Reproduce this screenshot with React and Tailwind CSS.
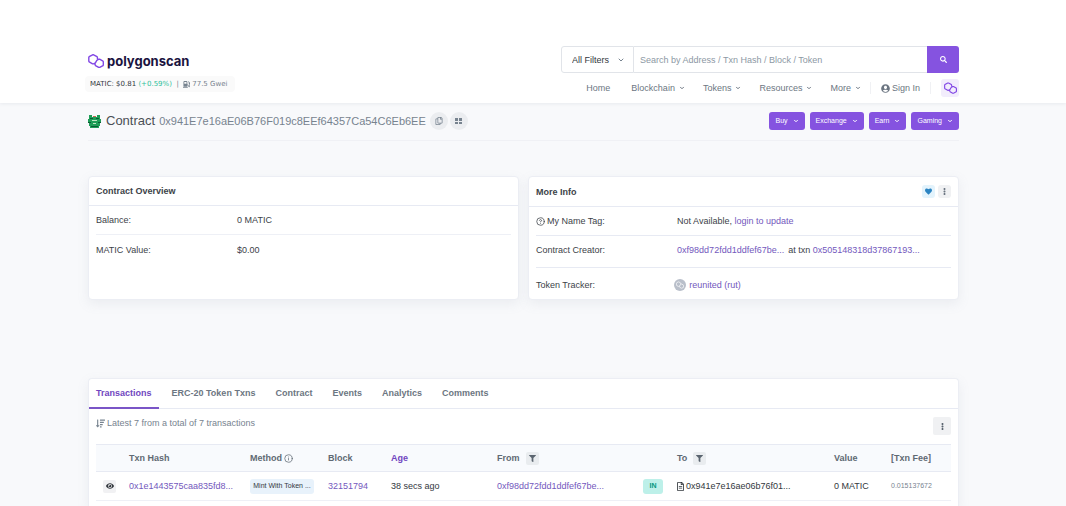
import React from 'react';
import {
    FaEllipsisV,
    FaEye,
    FaFilter,
    FaGasPump,
    FaHeart,
    FaRegCopy,
    FaRegFileAlt,
    FaSearch,
    FaSortAmountDown,
    FaUserCircle,
} from 'react-icons/fa';
import { ChevronDown, CircleHelp, Info } from 'lucide-react';

const navItems = ['Blockchain', 'Tokens', 'Resources', 'More'];

const actions = ['Buy', 'Exchange', 'Earn', 'Gaming'];

const tabs = ['Transactions', 'ERC-20 Token Txns', 'Contract', 'Events', 'Analytics', 'Comments'];

const transactions = [
    {
        hash: '0x1e1443575caa835fd8...',
        method: 'Mint With Token ...',
        block: '32151794',
        age: '38 secs ago',
        from: '0xf98dd72fdd1ddfef67be...',
        direction: 'IN',
        to: '0x941e7e16ae06b76f01...',
        value: '0 MATIC',
        fee: '0.015137672',
    },
];

function PolygonMark({ className }) {
    return (
        <svg viewBox="0 0 16 14" fill="none" stroke="currentColor" strokeLinejoin="round" strokeLinecap="round" className={className} aria-hidden="true">
            <path d="M9.4 4.6V3.4L9 2.7 5.6.8h-1L1.2 2.7l-.4.7v3.8l.4.7 3.4 2h1L7.4 8.8 8.8 6.4l2-1.2h.8L15 7.1l.3.7v3.2l-.3.7-3.3 1.7h-1l-3.2-1.8-.4-.8v-.6" strokeWidth="1.4" />
        </svg>
    );
}

function Avatar() {
    return (
        <svg viewBox="0 0 13 13" className="h-[13px] w-[13px]" aria-hidden="true">
            <path fill="#1f9d57" d="M1 0h3v2h5V0h3v4h1v4h-1v3h-1v2H2v-2H1V8H0V4h1z" />
            <path fill="#0b5a34" d="M2 3h3v1H2zm6 0h3v1H8zM0 7h3v1H0zm10 0h3v1h-3zM3 11h7v1H3z" />
            <path fill="#bfe6c0" d="M4 5h5v1H4zM5 8h3v1H5z" />
            <path fill="#c9694f" d="M5 1h3v1H5z" />
        </svg>
    );
}

function GridIcon() {
    return (
        <svg viewBox="0 0 8 8" fill="currentColor" className="h-2 w-2" aria-hidden="true">
            <path d="M0 1h3v3H0zm4 0h3v3H4zM0 5h3v2H0zm4 0h3v2H4z" />
        </svg>
    );
}

function Header() {
    return (
        <header className="bg-white pr-[107px] pb-[6px] pl-[88px] pt-[46px] shadow-[0_1px_3px_rgba(189,197,209,0.25)]">
            <div className="flex justify-between gap-8">
                <div className="pt-[7px]">
                    <a href="#" className="flex items-center gap-[3px] leading-4">
                        <PolygonMark className="h-[14px] w-4 text-[#8247e5]" />
                        <span className="font-[Inter,sans-serif] text-[13px] font-bold text-[#1a1340]">polygonscan</span>
                    </a>
                    <div className="mt-[7px] -ml-[3px] flex h-4 items-center rounded-sm bg-[#fafafa] px-[5px] pr-2 font-['DejaVu_Sans',sans-serif] text-[7px] whitespace-pre text-[#77838f]">
                        <span className="text-[#33383e]">MATIC: $0.81 </span>
                        <span className="text-[#2fbf9b]">(+0.59%)</span>
                        <span>{'  |  '}</span>
                        <FaGasPump className="mr-[2px] h-[7px] w-[7px]" />
                        <span>77.5 Gwei</span>
                    </div>
                </div>

                <div className="flex flex-col items-end">
                    <form className="flex h-[27px] w-[398px]">
                        <div className="relative">
                            <select aria-label="Search filter" className="h-full w-[73px] appearance-none rounded-l-[3px] border border-[#e1e4e9] bg-white pl-[10px] text-[9px] text-[#33383e]">
                                <option>All Filters</option>
                            </select>
                            <ChevronDown className="pointer-events-none absolute top-[10px] right-[9px] h-2 w-2 text-[#77838f]" strokeWidth={3} />
                        </div>
                        <input
                            type="text"
                            aria-label="Search"
                            placeholder="Search by Address / Txn Hash / Block / Token"
                            className="min-w-0 flex-1 border-y border-[#e1e4e9] bg-white px-[6px] text-[9px] placeholder:text-[#8c98a4]"
                        />
                        <button type="submit" aria-label="Search" className="flex w-8 items-center justify-center rounded-r-[3px] bg-[#8553e0] text-white">
                            <FaSearch className="h-[7px] w-[7px]" />
                        </button>
                    </form>
                    <nav className="mt-[6px] flex h-[18px] items-center text-[9px] text-[#6c7682]">
                        <a href="#" className="mr-[21px]">Home</a>
                        {navItems.map((item) => (
                            <a key={item} href="#" className="mr-[18px] flex items-center gap-1">
                                {item}
                                <ChevronDown className="h-[6px] w-[6px]" strokeWidth={4} />
                            </a>
                        ))}
                        <a href="#" className="-ml-[9px] flex h-3 items-center gap-[2px] border-x border-[#f0f1f4] px-[10px]">
                            <FaUserCircle className="h-[9px] w-[9px]" />
                            Sign In
                        </a>
                        <button type="button" aria-label="Network" className="ml-[10px] flex h-[18px] w-[18px] items-center justify-center rounded-[3px] bg-[#f2edfc] text-[#8247e5]">
                            <PolygonMark className="h-3 w-[13px]" />
                        </button>
                    </nav>
                </div>
            </div>
        </header>
    );
}

function TitleBar() {
    return (
        <div className="flex items-center justify-between border-b border-[#f0f1f5] pt-[9px] pb-[10px]">
            <div className="flex items-center">
                <Avatar />
                <h1 className="ml-[5px] flex items-baseline gap-1 text-[13px] leading-[18px] text-[#4a4f55]">
                    Contract <span className="text-[11px] text-[#77838f]">0x941E7e16aE06B76F019c8EEf64357Ca54C6Eb6EE</span>
                </h1>
                <button type="button" aria-label="Copy address" className="ml-1 flex h-[18px] w-[18px] items-center justify-center rounded-full bg-[#ebedf0] text-[#77838f]">
                    <FaRegCopy className="h-2 w-2" />
                </button>
                <button type="button" aria-label="Show QR code" className="ml-[2px] flex h-[18px] w-[18px] items-center justify-center rounded-full bg-[#ebedf0] text-[#77838f]">
                    <GridIcon />
                </button>
            </div>
            <div className="flex gap-[5px]">
                {actions.map((action) => (
                    <button key={action} type="button" className="flex h-[18px] items-center gap-[5px] rounded-[3px] bg-[#8553e0] px-[6px] text-[7px] text-white">
                        {action}
                        <ChevronDown className="h-[6px] w-[6px]" strokeWidth={4} />
                    </button>
                ))}
            </div>
        </div>
    );
}

function Card({ className = '', children }) {
    return (
        <section className={`rounded-[4px] border border-[#eceef4] bg-white shadow-[0_4px_12px_rgba(140,152,164,0.12)] ${className}`}>
            {children}
        </section>
    );
}

function InfoCards() {
    return (
        <div className="mt-[35px] grid grid-cols-2 gap-[9px] text-[#3c4248]">
            <Card>
                <h2 className="border-b border-[#e7eaf3] px-[7px] leading-[28px] font-bold">Contract Overview</h2>
                <dl className="px-[7px]">
                    <div className="flex h-[29px] items-center border-b border-[#eef0f6]">
                        <dt className="w-[34%]">Balance:</dt>
                        <dd>0 MATIC</dd>
                    </div>
                    <div className="flex h-[29px] items-center">
                        <dt className="w-[34%]">MATIC Value:</dt>
                        <dd>$0.00</dd>
                    </div>
                </dl>
            </Card>

            <Card>
                <div className="flex h-[30px] items-center justify-between border-b border-[#e7eaf3] px-[7px]">
                    <h2 className="font-bold">More Info</h2>
                    <div className="flex gap-[3px]">
                        <button type="button" aria-label="Add to favourites" className="flex h-[13px] w-[13px] items-center justify-center rounded-[3px] bg-[#e3f3fc] text-[#2b84c2]">
                            <FaHeart className="h-[7px] w-[7px]" />
                        </button>
                        <button type="button" aria-label="More options" className="flex h-[13px] w-[13px] items-center justify-center rounded-[3px] bg-[#f0f1f3] text-[#6c7682]">
                            <FaEllipsisV className="h-[7px] w-[7px]" />
                        </button>
                    </div>
                </div>
                <dl className="px-[7px]">
                    <div className="flex h-[29px] items-center border-b border-[#e7eaf3]">
                        <dt className="flex w-[34%] items-center gap-[2px]">
                            <CircleHelp className="h-[9px] w-[9px]" />
                            My Name Tag:
                        </dt>
                        <dd>
                            Not Available, <a href="#" className="text-[#7358bd]">login to update</a>
                        </dd>
                    </div>
                    <div className="flex h-8 items-center border-b border-[#e7eaf3] pb-[3px]">
                        <dt className="w-[34%]">Contract Creator:</dt>
                        <dd className="flex gap-1">
                            <a href="#" className="text-[#7358bd]">0xf98dd72fdd1ddfef67be...</a>
                            <span>
                                at txn <a href="#" className="text-[#7358bd]">0x505148318d37867193...</a>
                            </span>
                        </dd>
                    </div>
                    <div className="flex h-[31px] items-center pt-[2px]">
                        <dt className="w-1/3">Token Tracker:</dt>
                        <dd className="flex items-center gap-[3px]">
                            <span className="flex h-3 w-3 items-center justify-center rounded-full bg-[#b9bfca] text-white">
                                <PolygonMark className="h-2 w-2" />
                            </span>
                            <a href="#" className="text-[#7358bd]">reunited (rut)</a>
                        </dd>
                    </div>
                </dl>
            </Card>
        </div>
    );
}

function FilterButton({ label }) {
    return (
        <button type="button" aria-label={label} className="flex h-[13px] w-[13px] items-center justify-center rounded-[2px] bg-[#e9ecef] text-[#5b6570]">
            <FaFilter className="h-[7px] w-[7px]" />
        </button>
    );
}

function TransactionTable() {
    return (
        <table className="mt-[9px] w-full table-fixed text-left">
            <colgroup>
                <col className="w-[33px]" />
                <col className="w-[121px]" />
                <col className="w-[78px]" />
                <col className="w-[63px]" />
                <col className="w-[106px]" />
                <col className="w-[146px]" />
                <col className="w-[34px]" />
                <col className="w-[157px]" />
                <col className="w-[57px]" />
                <col />
            </colgroup>
            <thead>
                <tr className="h-[27px] border-y border-[#e7eaf3] bg-[#f8fafd] text-[#5f6973]">
                    <th />
                    <th>Txn Hash</th>
                    <th>
                        <span className="flex items-center gap-[2px]">
                            Method <Info className="h-[9px] w-[9px]" />
                        </span>
                    </th>
                    <th>Block</th>
                    <th className="text-[#7046c0]">Age</th>
                    <th>
                        <span className="flex items-center gap-[6px]">
                            From <FilterButton label="Filter by sender" />
                        </span>
                    </th>
                    <th />
                    <th>
                        <span className="flex items-center gap-[6px]">
                            To <FilterButton label="Filter by recipient" />
                        </span>
                    </th>
                    <th>Value</th>
                    <th>[Txn Fee]</th>
                </tr>
            </thead>
            <tbody>
                {transactions.map((tx) => (
                    <tr key={tx.hash} className="h-[29px] border-b border-[#eef0f6] text-[#33383e]">
                        <td>
                            <button type="button" aria-label="Preview transaction" className="ml-[7px] flex h-[13px] w-[13px] items-center justify-center rounded-[2px] bg-[#f1f1f3]">
                                <FaEye className="h-2 w-2" />
                            </button>
                        </td>
                        <td><a href="#" className="text-[#7358bd]">{tx.hash}</a></td>
                        <td>
                            <span className="flex h-[15px] w-16 items-center justify-center rounded-[3px] bg-[#e8f2fb] text-[7px] whitespace-nowrap">{tx.method}</span>
                        </td>
                        <td><a href="#" className="text-[#7358bd]">{tx.block}</a></td>
                        <td>{tx.age}</td>
                        <td><a href="#" className="text-[#7358bd]">{tx.from}</a></td>
                        <td>
                            <span className="flex h-[15px] w-5 items-center justify-center rounded-[3px] bg-[#bdf0e9] text-[7px] font-bold text-[#02977e]">{tx.direction}</span>
                        </td>
                        <td>
                            <span className="flex items-center gap-[2px]">
                                <FaRegFileAlt className="h-[9px] w-[7px]" />
                                {tx.to}
                            </span>
                        </td>
                        <td>{tx.value}</td>
                        <td className="text-[7px] text-[#77838f]">{tx.fee}</td>
                    </tr>
                ))}
            </tbody>
        </table>
    );
}

export default function App() {
    return (
        <div className="flex min-h-screen flex-col bg-[#f8f9fb] font-['Liberation_Sans',Arial,sans-serif] text-[9px] leading-3">
            <Header />
            <main className="flex flex-1 flex-col pr-[107px] pl-[88px]">
                <TitleBar />
                <InfoCards />
                <Card className="mt-[78px] flex-1 rounded-b-none border-b-0">
                    <div role="tablist" className="flex gap-[6px] border-b border-[#e7eaf3] font-bold text-[#6c7682]">
                        {tabs.map((tab, i) => (
                            <button
                                key={tab}
                                type="button"
                                role="tab"
                                aria-selected={i === 0}
                                className="-mb-px h-[30px] border-b-2 border-transparent px-[7px] aria-selected:border-[#7a55c7] aria-selected:text-[#7046c0]"
                            >
                                {tab}
                            </button>
                        ))}
                    </div>
                    <div className="px-[7px] pt-2">
                        <div className="flex items-start justify-between text-[#77838f]">
                            <p className="flex items-center gap-[2px]">
                                <FaSortAmountDown className="h-[9px] w-[9px]" />
                                Latest 7 from a total of 7 transactions
                            </p>
                            <button type="button" aria-label="Table options" className="flex h-[18px] w-[18px] items-center justify-center rounded-[2px] bg-[#f0f1f3] text-[#5b6570]">
                                <FaEllipsisV className="h-[7px] w-[7px]" />
                            </button>
                        </div>
                        <TransactionTable />
                    </div>
                </Card>
            </main>
        </div>
    );
}
